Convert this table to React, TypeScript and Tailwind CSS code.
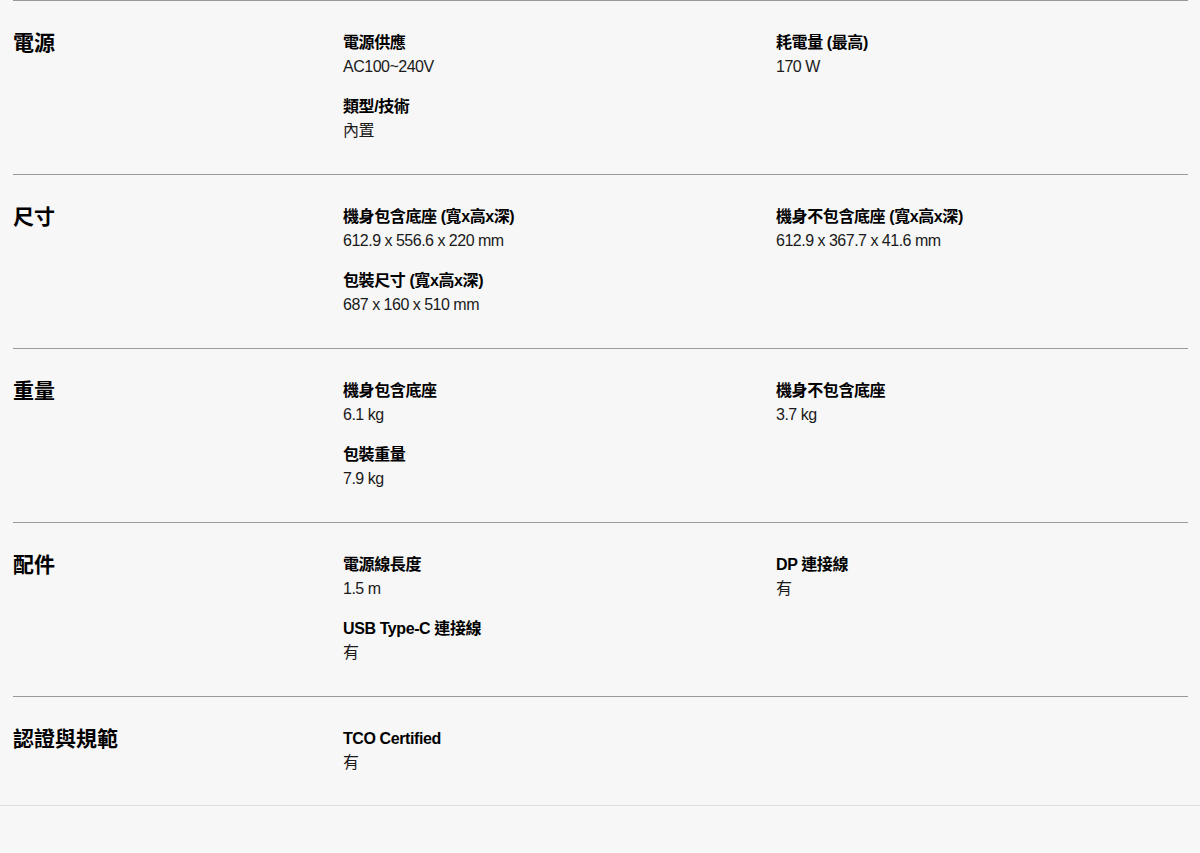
import React from 'react';

type Spec = { label: string; value: string };
type Group = { title: string; left: Spec[]; right: Spec[] };

const groups: Group[] = [
  {
    title: '電源',
    left: [
      { label: '電源供應', value: 'AC100~240V' },
      { label: '類型/技術', value: '內置' },
    ],
    right: [{ label: '耗電量 (最高)', value: '170 W' }],
  },
  {
    title: '尺寸',
    left: [
      { label: '機身包含底座 (寬x高x深)', value: '612.9 x 556.6 x 220 mm' },
      { label: '包裝尺寸 (寬x高x深)', value: '687 x 160 x 510 mm' },
    ],
    right: [{ label: '機身不包含底座 (寬x高x深)', value: '612.9 x 367.7 x 41.6 mm' }],
  },
  {
    title: '重量',
    left: [
      { label: '機身包含底座', value: '6.1 kg' },
      { label: '包裝重量', value: '7.9 kg' },
    ],
    right: [{ label: '機身不包含底座', value: '3.7 kg' }],
  },
  {
    title: '配件',
    left: [
      { label: '電源線長度', value: '1.5 m' },
      { label: 'USB Type-C 連接線', value: '有' },
    ],
    right: [{ label: 'DP 連接線', value: '有' }],
  },
  {
    title: '認證與規範',
    left: [{ label: 'TCO Certified', value: '有' }],
    right: [],
  },
];

function SpecList({ items }: { items: Spec[] }) {
  return (
    <dl className="flex flex-col gap-4">
      {items.map((item) => (
        <div key={item.label} className="flex flex-col">
          <dt className="text-[16px] leading-6 font-bold tracking-[-0.4px] text-black">{item.label}</dt>
          <dd className="text-[16px] leading-6 tracking-[-0.5px] text-[#1a1a1a]">{item.value}</dd>
        </div>
      ))}
    </dl>
  );
}

export default function App() {
  return (
    <div
      className="min-h-[853px] bg-[#f7f7f7]"
      style={{ fontFamily: '"Liberation Sans", "Noto Sans CJK TC", sans-serif' }}
    >
      <div className="ml-[13px] mr-[12px]">
        {groups.map((g, i) => (
          <section
            key={g.title}
            className={`grid grid-cols-[330px_433px_1fr] border-t border-[#9a9a9a] pt-[30px] ${
              i === groups.length - 1 ? 'pb-[30px]' : 'pb-[31px]'
            }`}
          >
            <h2 className="text-[21px] leading-6 font-bold text-black">{g.title}</h2>
            <SpecList items={g.left} />
            <SpecList items={g.right} />
          </section>
        ))}
      </div>
      <div className="border-t border-[#dddddd]" />
    </div>
  );
}
